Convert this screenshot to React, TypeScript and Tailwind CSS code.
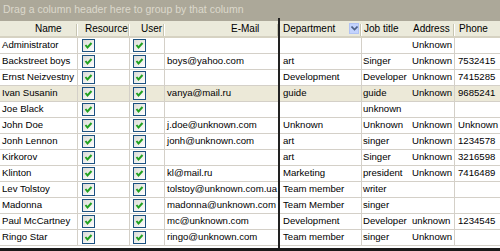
import React from 'react';

type Row = {
  name: string;
  email: string;
  dept: string;
  job: string;
  addr: string;
  phone: string;
  selected?: boolean;
};

const ROWS: Row[] = [
  { name: 'Administrator', email: '', dept: '', job: '', addr: 'Unknown', phone: '' },
  { name: 'Backstreet boys', email: 'boys@yahoo.com', dept: 'art', job: 'Singer', addr: 'Unknown', phone: '7532415' },
  { name: 'Ernst Neizvestny', email: '', dept: 'Development', job: 'Developer', addr: 'Unknown', phone: '7415285' },
  { name: 'Ivan Susanin', email: 'vanya@mail.ru', dept: 'guide', job: 'guide', addr: 'Unknown', phone: '9685241', selected: true },
  { name: 'Joe Black', email: '', dept: '', job: 'unknown', addr: '', phone: '' },
  { name: 'John Doe', email: 'j.doe@unknown.com', dept: 'Unknown', job: 'Unknown', addr: 'Unknown', phone: 'Unknown' },
  { name: 'Jonh Lennon', email: 'jonh@unknown.com', dept: 'art', job: 'singer', addr: 'Unknown', phone: '1234578' },
  { name: 'Kirkorov', email: '', dept: 'art', job: 'Singer', addr: 'Unknown', phone: '3216598' },
  { name: 'Klinton', email: 'kl@mail.ru', dept: 'Marketing', job: 'president', addr: 'Unknown', phone: '7416489' },
  { name: 'Lev Tolstoy', email: 'tolstoy@unknown.com.ua', dept: 'Team member', job: 'writer', addr: '', phone: '' },
  { name: 'Madonna', email: 'madonna@unknown.com', dept: 'Team Member', job: 'singer', addr: '', phone: '' },
  { name: 'Paul McCartney', email: 'mc@unknown.com', dept: 'Development', job: 'Developer', addr: 'unknown', phone: '1234545' },
  { name: 'Ringo Star', email: 'ringo@unknown.com', dept: 'Team member', job: 'singer', addr: 'Unknown', phone: '' },
];

// XP style checked box
const Check: React.FC = () => (
  <span className="w-[13px] h-[13px] border border-[#1c5180] bg-gradient-to-br from-[#dcdcd7] to-white flex items-center justify-center">
    <svg width="9" height="9" viewBox="0 0 9 9">
      <path d="M1.5 4 L3.5 6.5 L7.5 2" stroke="#21a121" strokeWidth="2" fill="none" />
    </svg>
  </span>
);

const HeadSep: React.FC = () => (
  <span className="absolute right-0 top-[3px] h-[12px] w-[2px] border-l border-[#c7c5b2] bg-white" />
);

export default function App() {
  const cell = 'h-full border-r border-[#d4d0c8] flex items-center overflow-hidden whitespace-nowrap';

  return (
    <div
      className="relative w-[500px] h-[251px] bg-white text-[9.6px] text-black overflow-hidden flex flex-col"
      style={{ fontFamily: '"Liberation Sans", Arial, sans-serif' }}
    >
      {/* Group panel */}
      <div className="h-[21px] bg-[#aca899] text-[#dcd9cc] text-[10.5px] pl-[3px] pt-[2px] leading-[14px]">
        Drag a column header here to group by that column
      </div>

      {/* Header */}
      <div className="h-[17px] flex bg-[#ebeadb] border-b-2 border-[#d6d2c2] leading-[15px] text-[10px]">
        <div className="relative w-[78px] pl-[35px]">Name<HeadSep /></div>
        <div className="relative w-[52px] pl-[7px]">Resource<HeadSep /></div>
        <div className="relative w-[35px] pl-[11px]">User<HeadSep /></div>
        <div className="relative w-[114px] pl-[66px]">E-Mail<HeadSep /></div>
        <div className="relative w-[83px] pl-[4px] flex">
          <span>Department</span>
          <span className="absolute left-[70px] top-[2px] w-[10px] h-[11px] bg-[#c3d3fd] border border-[#b1c3f4] flex items-center justify-center">
            <svg width="7" height="5" viewBox="0 0 7 5">
              <path d="M0.5 0.5 L3.5 3.5 L6.5 0.5" stroke="#4d6185" strokeWidth="1.6" fill="none" />
            </svg>
          </span>
          <HeadSep />
        </div>
        <div className="relative w-[47px] pl-[2px]">Job title</div>
        <div className="relative w-[46px] pl-[4px]">Address<HeadSep /></div>
        <div className="relative w-[45px] pl-[4px]">Phone</div>
      </div>

      {/* Rows */}
      {ROWS.map((r) => (
        <div
          key={r.name}
          className={`h-[16px] flex border-b border-[#d4d0c8] ${r.selected ? 'bg-[#ece9d8]' : ''}`}
        >
          <div className={`${cell} w-[78px] pl-[2px]`}>{r.name}</div>
          <div className={`${cell} w-[52px] pl-[4px]`}><Check /></div>
          <div className={`${cell} w-[35px] pl-[3px]`}><Check /></div>
          <div className={`${cell} w-[114px] pl-[2px]`}>{r.email}</div>
          <div className={`${cell} w-[83px] pl-[4px]`}>{r.dept}</div>
          <div className="h-full w-[47px] pl-[1px] flex items-center whitespace-nowrap overflow-hidden">{r.job}</div>
          <div className={`${cell} w-[46px] pl-[3px]`}>{r.addr}</div>
          <div className="h-full w-[45px] pl-[3px] flex items-center whitespace-nowrap overflow-hidden">{r.phone}</div>
        </div>
      ))}

      <div className="flex-1" />
      <div className="h-[3px] bg-[#1a1a1a]" />

      {/* drag position marker */}
      <span className="absolute left-[278px] top-[18px] bottom-[3px] w-[2px] bg-[#222]" />
    </div>
  );
}
